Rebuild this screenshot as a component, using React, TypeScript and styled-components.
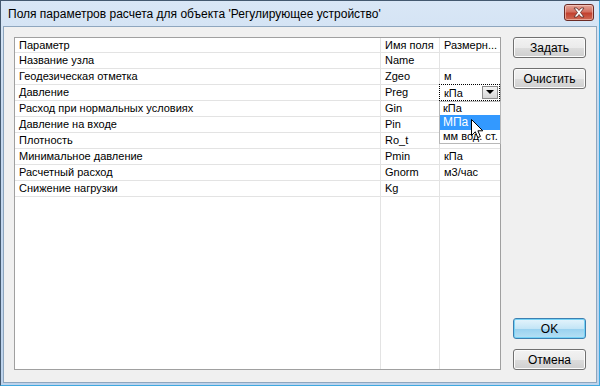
import React from "react";
import styled, { createGlobalStyle } from "styled-components";

const Global = createGlobalStyle`
  html, body { margin: 0; padding: 0; background: #ffffff; }
  body { font-family: "Liberation Sans", Arial, sans-serif; }
  * { box-sizing: border-box; }
`;

const Window = styled.div`
  width: 600px;
  height: 386px;
  display: flex;
  flex-direction: column;
  background: linear-gradient(180deg, #d9e7f6 0%, #c5d8ee 30%, #bdd3ec 100%);
  border: 1px solid #44596f;
  border-right-color: #3fa9e0;
  border-bottom-color: #3fa9e0;
  padding: 0 2px 2px 2px;
  overflow: hidden;
`;

const TitleBar = styled.div`
  height: 25px;
  flex: none;
  display: flex;
  align-items: center;
  justify-content: space-between;
  padding: 0 3px 0 5px;
`;

const Title = styled.div`
  font-family: "Liberation Sans", Arial, sans-serif;
  font-size: 12px;
  color: #000;
`;

const CloseButton = styled.div`
  width: 30px;
  height: 17px;
  margin-top: -3px;
  border: 1px solid #6b2b25;
  border-radius: 3px;
  background: linear-gradient(180deg, #e3a598 0%, #d37060 45%, #c2412f 55%, #cf6a55 100%);
  box-shadow: inset 0 0 0 1px rgba(255, 220, 210, 0.55);
  display: flex;
  align-items: center;
  justify-content: center;
`;

const Client = styled.div`
  flex: 1;
  display: flex;
  gap: 12px;
  background: #f0f0f0;
  border: 1px solid #8ea6be;
  padding: 10px 10px 12px 10px;
  min-height: 0;
`;

const Table = styled.div`
  flex: 1;
  display: flex;
  flex-direction: column;
  background: #ffffff;
  border: 1px solid #a0a0a0;
  font-family: "Liberation Sans", Arial, sans-serif;
  font-size: 11px;
  color: #000;
`;

const Row = styled.div<{ $filler?: boolean; $header?: boolean }>`
  display: grid;
  grid-template-columns: 366px 59px 1fr;
  height: ${(p) => (p.$filler ? "auto" : p.$header ? "15px" : "16px")};
  flex: ${(p) => (p.$filler ? "1" : "none")};
`;

const Cell = styled.div<{ $last?: boolean; $filler?: boolean }>`
  position: relative;
  padding: 0 0 0 4px;
  line-height: 14px;
  white-space: nowrap;
  overflow: visible;
  border-right: ${(p) => (p.$last ? "none" : "1px solid #e3e3e3")};
  border-bottom: ${(p) => (p.$filler ? "none" : "1px solid #e3e3e3")};
`;

const Combo = styled.div`
  position: absolute;
  left: -1px;
  top: -1px;
  right: 0;
  height: 17px;
  border: 1px dotted #000;
  background: #fff;
  display: flex;
  align-items: center;
  justify-content: space-between;
  padding: 0 1px 0 4px;
  z-index: 2;
`;

const ComboButton = styled.div`
  width: 16px;
  height: 13px;
  border: 1px solid #8c8c8c;
  background: linear-gradient(180deg, #f4f4f4 0%, #e6e6e6 50%, #d6d6d6 100%);
  display: flex;
  align-items: center;
  justify-content: center;
`;

const DropList = styled.div`
  position: absolute;
  left: -1px;
  top: 16px;
  width: 62px;
  background: #fff;
  border: 1px solid #b8b8b8;
  z-index: 3;
`;

const DropItem = styled.div<{ $selected?: boolean }>`
  height: ${(p) => (p.$selected ? "15px" : "13px")};
  line-height: ${(p) => (p.$selected ? "15px" : "13px")};
  padding-left: 3px;
  font-size: ${(p) => (p.$selected ? "12px" : "11px")};
  background: ${(p) => (p.$selected ? "#3399ff" : "#fff")};
  color: ${(p) => (p.$selected ? "#fff" : "#000")};
  white-space: nowrap;
`;

const Cursor = styled.svg`
  position: absolute;
  left: 31px;
  top: 17px;
  z-index: 4;
`;

const Side = styled.div`
  width: 73px;
  display: flex;
  flex-direction: column;
`;

const Button = styled.div<{ $default?: boolean; $flush?: boolean }>`
  height: 21px;
  border: 1px solid ${(p) => (p.$default ? "#3c7fb1" : "#707070")};
  border-radius: 3px;
  background: ${(p) =>
    p.$default
      ? "linear-gradient(180deg, #e5f4fc 0%, #c4e5f6 50%, #98d1ef 51%, #b6e0f5 100%)"
      : "linear-gradient(180deg, #f2f2f2 0%, #ebebeb 50%, #dddddd 51%, #cfcfcf 100%)"};
  box-shadow: inset 0 0 0 1px ${(p) => (p.$default ? "#76d3f6" : "#fcfcfc")};
  display: flex;
  align-items: center;
  justify-content: center;
  font-family: "Liberation Sans", Arial, sans-serif;
  font-size: 12px;
  color: #000;
  margin-bottom: ${(p) => (p.$flush ? "0" : "10px")};
`;

const Spacer = styled.div`
  flex: 1;
`;

const rows: [string, string, string][] = [
  ["Название узла", "Name", ""],
  ["Геодезическая отметка", "Zgeo", "м"],
  ["Давление", "Preg", "кПа"],
  ["Расход при нормальных условиях", "Gin", ""],
  ["Давление на входе", "Pin", ""],
  ["Плотность", "Ro_t", "кг/м3"],
  ["Минимальное давление", "Pmin", "кПа"],
  ["Расчетный расход", "Gnorm", "м3/час"],
  ["Снижение нагрузки", "Kg", ""],
];

export default function App() {
  return (
    <>
      <Global />
      <Window>
        <TitleBar>
          <Title>Поля параметров расчета для объекта 'Регулирующее устройство'</Title>
          <CloseButton>
            <svg width="14" height="11" viewBox="0 0 14 11">
              <path
                d="M2 1 L5 1 L7 3.5 L9 1 L12 1 L8.5 5.5 L12 10 L9 10 L7 7.5 L5 10 L2 10 L5.5 5.5 Z"
                fill="#ffffff"
                stroke="#5a2a24"
                strokeWidth="0.8"
                strokeLinejoin="round"
              />
            </svg>
          </CloseButton>
        </TitleBar>
        <Client>
          <Table>
            <Row $header>
              <Cell>Параметр</Cell>
              <Cell>Имя поля</Cell>
              <Cell $last>Размерн...</Cell>
            </Row>
            {rows.map(([name, field, unit], i) => (
              <Row key={field}>
                <Cell>{name}</Cell>
                <Cell>{field}</Cell>
                <Cell $last>
                  {i === 2 ? (
                    <Combo>
                      <span>кПа</span>
                      <ComboButton>
                        <svg width="8" height="5" viewBox="0 0 8 5">
                          <path d="M0 0 L8 0 L4 4 Z" fill="#000" />
                        </svg>
                      </ComboButton>
                      <DropList>
                        <DropItem>кПа</DropItem>
                        <DropItem $selected>МПа</DropItem>
                        <DropItem>мм вод. ст.</DropItem>
                        <Cursor width="13" height="21" viewBox="0 0 13 21">
                          <path
                            d="M0.5 0.5 L0.5 16.5 L4.3 12.8 L6.8 18.6 L9.4 17.5 L6.9 11.8 L11.8 11.8 Z"
                            fill="#ffffff"
                            stroke="#000000"
                            strokeWidth="1"
                          />
                        </Cursor>
                      </DropList>
                    </Combo>
                  ) : (
                    unit
                  )}
                </Cell>
              </Row>
            ))}
            <Row $filler>
              <Cell $filler />
              <Cell $filler />
              <Cell $filler $last />
            </Row>
          </Table>
          <Side>
            <Button>Задать</Button>
            <Button>Очистить</Button>
            <Spacer />
            <Button $default>OK</Button>
            <Button $flush>Отмена</Button>
          </Side>
        </Client>
      </Window>
    </>
  );
}
